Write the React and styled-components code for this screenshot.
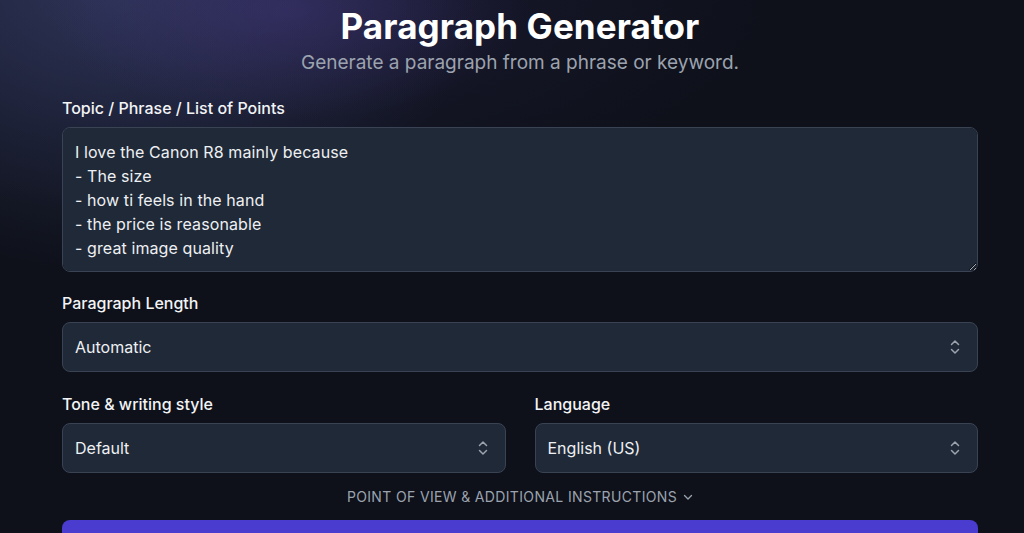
import React from "react";
import styled, { createGlobalStyle } from "styled-components";

const Global = createGlobalStyle`
  html, body { margin: 0; padding: 0; }
  body {
    background: #0e111a;
    font-family: Inter, "Noto Sans", "Liberation Sans", sans-serif;
    color: #f3f4f6;
    overflow: hidden;
  }
  * { box-sizing: border-box; }
`;

const Page = styled.div`
  width: 1024px;
  height: 533px;
  overflow: hidden;
  background:
    radial-gradient(ellipse 240px 110px at 290px 10px, rgba(80, 60, 150, 0.33), transparent 100%),
    radial-gradient(ellipse 380px 290px at 100px -20px, rgba(62, 72, 118, 0.55), transparent 100%),
    radial-gradient(ellipse 560px 240px at 220px -20px, rgba(50, 45, 100, 0.35), transparent 100%),
    #0e111a;
  padding: 6px 46px 0 62px;
  display: flex;
  flex-direction: column;
`;

const Header = styled.header`
  display: flex;
  flex-direction: column;
  align-items: center;
  gap: 3px;
  margin-bottom: 19px;
`;

const Title = styled.h1`
  margin: 0;
  font-size: 35px;
  line-height: 40px;
  font-weight: 700;
  color: #ffffff;
  letter-spacing: 0.1px;
`;

const Subtitle = styled.p`
  margin: 0;
  font-size: 19px;
  line-height: 28px;
  color: #9ca3af;
  font-weight: 400;
`;

const Field = styled.div`
  display: flex;
  flex-direction: column;
  gap: 7px;
  flex: 1;
  min-width: 0;
`;

const Group = styled.div`
  margin-bottom: ${(p) => (p.$last ? "20px" : "19px")};
`;

const Row = styled.div`
  display: flex;
  gap: 29px;
`;

const Label = styled.label`
  font-size: 16px;
  line-height: 24px;
  font-weight: 500;
  color: #f3f4f6;
`;

const TextArea = styled.textarea`
  width: 100%;
  height: 145px;
  background: #1f2937;
  border: 1px solid #394353;
  border-radius: 8px;
  padding: 12px;
  color: #eef0f3;
  font-family: inherit;
  font-size: 16px;
  line-height: 24px;
  letter-spacing: 0.1px;
  resize: vertical;
  color-scheme: dark;
  outline: none;
  display: block;
`;

const SelectWrap = styled.div`
  position: relative;
`;

const Select = styled.select`
  appearance: none;
  width: 100%;
  height: 50px;
  background: #1f2937;
  border: 1px solid #394353;
  border-radius: 8px;
  padding: 0 40px 0 12px;
  color: #eef0f3;
  font-family: inherit;
  font-size: 16px;
  outline: none;
`;

const IconBox = styled.span`
  position: absolute;
  right: 17px;
  top: 50%;
  transform: translateY(-50%);
  display: flex;
  pointer-events: none;
  color: #9ca3af;
`;

const Toggle = styled.button`
  align-self: center;
  margin: -5px 0 13px;
  background: none;
  border: none;
  padding: 0;
  display: flex;
  align-items: center;
  gap: 6px;
  font-family: inherit;
  font-size: 14px;
  line-height: 20px;
  letter-spacing: 0.35px;
  color: #9ca3af;
  text-transform: uppercase;
  cursor: pointer;
`;

const Submit = styled.button`
  width: 100%;
  height: 48px;
  flex-shrink: 0;
  border: none;
  border-radius: 8px;
  background: #4a3cce;
`;

const UpDown = () => (
  <svg width="12" height="18" viewBox="0 0 12 18" fill="none" stroke="currentColor" strokeWidth="1.5" strokeLinecap="round" strokeLinejoin="round">
    <path d="M2.5 6.5 6 3l3.5 3.5" />
    <path d="M2.5 11.5 6 15l3.5-3.5" />
  </svg>
);

const ChevronDown = () => (
  <svg width="10" height="10" viewBox="0 0 10 10" fill="none" stroke="currentColor" strokeWidth="1.3" strokeLinecap="round" strokeLinejoin="round">
    <path d="M1.5 3.5 5 7l3.5-3.5" />
  </svg>
);

const SelectField = ({ value, options }) => (
  <SelectWrap>
    <Select defaultValue={value}>
      {options.map((o) => (
        <option key={o}>{o}</option>
      ))}
    </Select>
    <IconBox>
      <UpDown />
    </IconBox>
  </SelectWrap>
);

const text = `I love the Canon R8 mainly because
- The size
- how ti feels in the hand
- the price is reasonable
- great image quality`;

export default function App() {
  return (
    <>
      <Global />
      <Page>
        <Header>
          <Title>Paragraph Generator</Title>
          <Subtitle>Generate a paragraph from a phrase or keyword.</Subtitle>
        </Header>
        <Group>
          <Field>
            <Label>Topic / Phrase / List of Points</Label>
            <TextArea defaultValue={text} />
          </Field>
        </Group>
        <Group $last>
          <Field>
            <Label>Paragraph Length</Label>
            <SelectField value="Automatic" options={["Automatic", "Short", "Medium", "Long"]} />
          </Field>
        </Group>
        <Group>
          <Row>
            <Field>
              <Label>Tone &amp; writing style</Label>
              <SelectField value="Default" options={["Default", "Formal", "Casual"]} />
            </Field>
            <Field>
              <Label>Language</Label>
              <SelectField value="English (US)" options={["English (US)", "English (UK)", "Spanish"]} />
            </Field>
          </Row>
        </Group>
        <Toggle>
          Point of view &amp; additional instructions
          <ChevronDown />
        </Toggle>
        <Submit aria-label="Generate Paragraph" />
      </Page>
    </>
  );
}
